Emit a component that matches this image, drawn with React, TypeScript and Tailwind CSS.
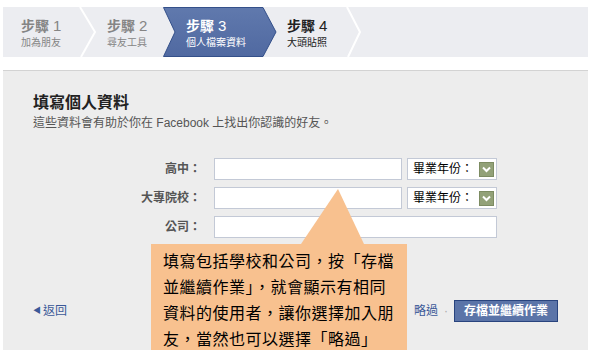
import { useState } from "react";

type Step = {
  num: number;
  title: string;
  width: string;
  state: "done" | "active" | "todo";
};

const steps: Step[] = [
  { num: 1, title: "加為朋友", width: "w-[86px]", state: "done" },
  { num: 2, title: "尋友工具", width: "w-[79px]", state: "done" },
  { num: 3, title: "個人檔案資料", width: "w-[101px]", state: "active" },
  { num: 4, title: "大頭貼照", width: "w-[80px]", state: "todo" },
];

const font = "font-['Liberation_Sans','Noto_Sans_CJK_TC',sans-serif]";

function StepBar() {
  return (
    <div className="relative ml-[3px] mt-[7px] h-[50px] w-[585px] bg-[#ecedf1]">
      {/* chevrons between steps */}
      <svg className="absolute inset-0" width="585" height="50" viewBox="0 0 585 50">
        <polyline points="77,0 92,25 78,50" fill="none" stroke="#ffffff" strokeWidth="2" />
        <defs>
          <linearGradient id="act" x1="0" y1="0" x2="0" y2="1">
            <stop offset="0" stopColor="#6079ad" />
            <stop offset="1" stopColor="#5069a1" />
          </linearGradient>
        </defs>
        <polygon points="160.5,0.5 260,0.5 273,25 260,49.5 160.5,49.5 172,25" fill="url(#act)" stroke="#34508a" strokeWidth="1" />
        <polyline points="344,0 357,25 345,50" fill="none" stroke="#ffffff" strokeWidth="2" />
      </svg>
      <div className="relative flex pl-[18px] pt-[11px]">
        {steps.map((s) => {
          const color =
            s.state === "active" ? "text-white" : s.state === "todo" ? "text-[#222]" : "text-[#858585]";
          return (
            <div key={s.num} className={`${s.width} ${color}`}>
              <div className="text-[14px] font-bold leading-[16px]">
                步驟 <span className="text-[15px] font-normal">{s.num}</span>
              </div>
              <div className="mt-[3px] text-[10px] leading-[12px]">{s.title}</div>
            </div>
          );
        })}
      </div>
    </div>
  );
}

function YearSelect() {
  return (
    <div className="ml-[5px] flex h-[22px] w-[90px] items-center border border-[#c3c9d6] bg-white pl-[5px]">
      <span className="text-[12px] text-black">畢業年份：</span>
      <span className="ml-auto mr-[2px] flex h-[15px] w-[15px] items-center justify-center border border-[#7d8c62] bg-[#92a178]">
        <svg width="9" height="7" viewBox="0 0 9 7">
          <polyline points="1,1.5 4.5,5 8,1.5" fill="none" stroke="#fff" strokeWidth="2" />
        </svg>
      </span>
    </div>
  );
}

function FormRow({ label, select }: { label: string; select: boolean }) {
  const [value, setValue] = useState("");
  return (
    <div className="flex h-[22px] items-center">
      <div className="w-[168px] text-right text-[12px] font-bold text-[#555]">{label}</div>
      <input
        value={value}
        onChange={(e) => setValue(e.target.value)}
        className={`ml-[13px] h-[22px] ${select ? "w-[188px]" : "w-[283px]"} border border-[#c3c9d6] bg-white outline-none`}
      />
      {select && <YearSelect />}
    </div>
  );
}

function Callout() {
  return (
    <div className="absolute left-[151px] top-[189px] w-[256px]">
      <svg className="ml-[150px] block" width="63" height="55" viewBox="0 0 63 55">
        <polygon points="37,0 63,55 0,55" fill="#f8c18f" />
      </svg>
      <div className="h-[106px] bg-[#f8c18f] pl-[12px] pt-[3px] text-[16px] leading-[26px] tracking-[0.5px] text-black font-['Noto_Sans_CJK_TC',sans-serif]">
        <div>填寫包括學校和公司，按「存檔</div>
        <div>並繼續作業」，就會顯示有相同</div>
        <div>資料的使用者，讓你選擇加入朋</div>
        <div>友，當然也可以選擇「略過」</div>
      </div>
    </div>
  );
}

export default function App() {
  return (
    <div className={`relative h-[354px] w-[593px] overflow-hidden bg-white ${font}`}>
      <StepBar />
      <div className="ml-[3px] mt-[13px] w-[585px] border-t border-[#d3d3d3] bg-[#ededed] px-[30px] pb-[28px] pt-[22px]">
        <h1 className="text-[16px] font-bold leading-[20px] text-[#222]">填寫個人資料</h1>
        <p className="mt-[3px] text-[12px] leading-[14px] text-[#555]">
          這些資料會有助於你在 Facebook 上找出你認識的好友。
        </p>
        <div className="mt-[28px] flex flex-col gap-[7px]">
          <FormRow label="高中：" select />
          <FormRow label="大專院校：" select />
          <FormRow label="公司：" select={false} />
        </div>
        <div className="mt-[62px] flex h-[22px] items-center">
          <a className="flex items-center text-[12px] text-[#3b5998]">
            <span className="mr-[2px] text-[8px]">◀</span>返回
          </a>
          <div className="ml-auto flex items-center">
            <a className="text-[12px] text-[#3b5998]">略過</a>
            <span className="mx-[6px] text-[12px] text-[#aaa]">·</span>
            <button className="h-[22px] border border-[#29447e] bg-[#5b74a8] px-[9px] text-[12px] font-bold text-white">
              存檔並繼續作業
            </button>
          </div>
        </div>
      </div>
      <Callout />
    </div>
  );
}
